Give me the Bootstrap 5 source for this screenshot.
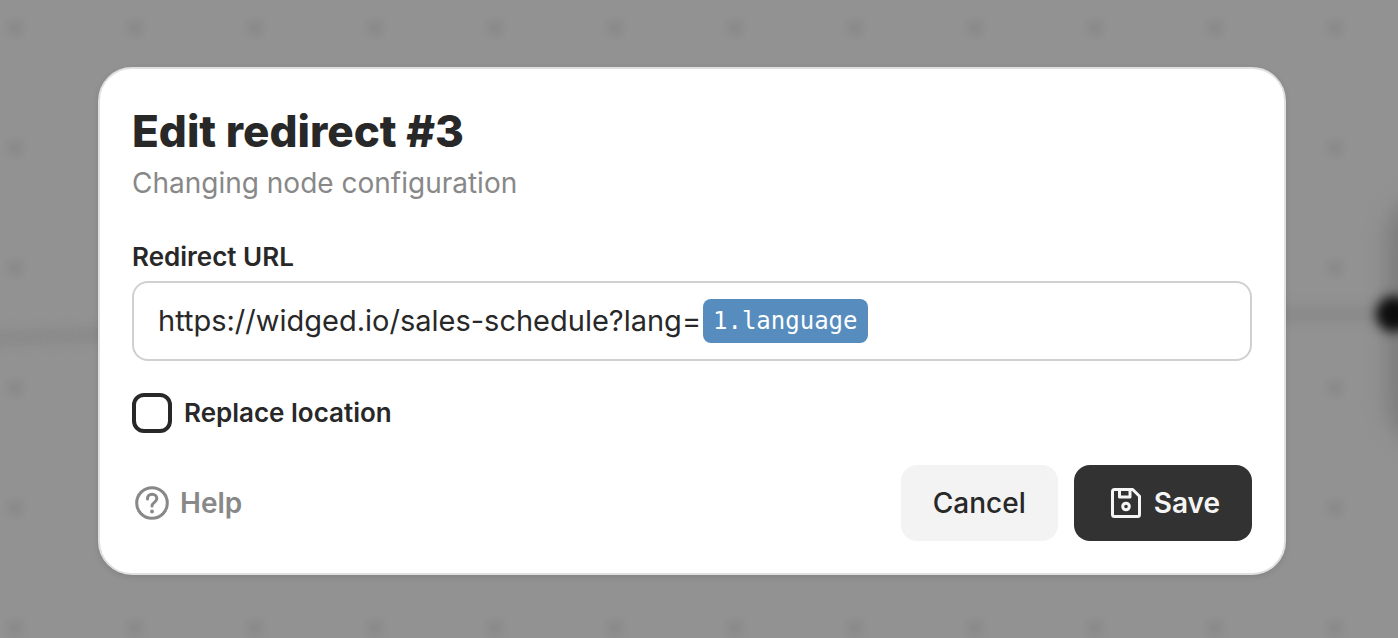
<!DOCTYPE html>
<html lang="en">
<head>
<meta charset="utf-8">
<meta name="viewport" content="width=device-width, initial-scale=1">
<title>Edit redirect #3</title>
<link href="https://cdn.jsdelivr.net/npm/bootstrap@5.3.0/dist/css/bootstrap.min.css" rel="stylesheet">
<style>
  body {
    font-family: Inter, "Liberation Sans", sans-serif;
    color: #282828;
    background: #929292;
  }
  /* blurred flow canvas behind the dialog */
  .flow-canvas {
    background: radial-gradient(circle at 15px 28px, #898989 0, #8e8e8e 7px, #929292 15px) 0 0 / 120px 120px;
    padding: 67px 112px 63px 98px;
    min-height: 100vh;
    overflow: hidden;
  }
  .flow-wire { height: 10px; background: #858585; filter: blur(7px); }
  .wire-in { left: -20px; width: 160px; top: 331px; transform: rotate(-2deg); }
  .wire-out { right: -20px; width: 180px; top: 309px; }
  .flow-node {
    right: -90px; top: 190px; width: 102px; height: 260px;
    border-radius: 50px; background: #7d7d7d; filter: blur(10px);
  }
  .flow-port {
    right: -14px; top: 296px; width: 36px; height: 36px;
    border-radius: 50%; background: #0c0c0c; filter: blur(6px);
  }
  .dialog-panel {
    background: #fff;
    border: 2px solid #e0e0e0;
    border-radius: 34px;
    padding: 32px;
    box-shadow: 0 2px 6px rgba(0, 0, 0, .1);
  }
  .dialog-title { font-size: 44px; line-height: 60px; font-weight: 800; }
  .dialog-subtitle { font-size: 28px; line-height: 44px; color: #888; }
  .field-block { padding-top: 36px; }
  .field-label { font-size: 26px; line-height: 32px; font-weight: 600; }
  .url-field {
    height: 80px;
    padding: 0 24px;
    border: 2px solid #d0d0d0;
    border-radius: 16px;
  }
  .url-text {
    width: 545px; padding: 0; border: 0; outline: 0;
    font-size: 29px; line-height: 40px; color: inherit; background: transparent;
  }
  .var-chip {
    height: 44px; padding: 0 10px;
    font: 24px/44px "DejaVu Sans Mono", monospace;
    color: #fff; background: #568cbe; border-radius: 8px;
  }
  .replace-check.form-check-input {
    width: 40px; height: 40px; margin: 0;
    border: 4px solid #282828; border-radius: 12px;
  }
  .help-link { font-size: 28px; line-height: 40px; font-weight: 600; color: #888; }
  .action-btn {
    height: 76px; padding: 0 32px;
    border: 0; border-radius: 16px;
    font-size: 28px; font-weight: 500;
  }
  .cancel-btn, .cancel-btn:hover { background: #f3f3f3; color: #282828; }
  .save-btn, .save-btn:hover { background: #323232; color: #f5f5f5; font-weight: 600; }
</style>
</head>
<body>
<div class="flow-canvas position-relative">
  <div class="flow-wire wire-in position-absolute"></div>
  <div class="flow-wire wire-out position-absolute"></div>
  <div class="flow-node position-absolute"></div>
  <div class="flow-port position-absolute"></div>

  <form class="dialog-panel position-relative" role="dialog" aria-labelledby="dialogTitle">
    <h1 class="dialog-title mb-0" id="dialogTitle">Edit redirect #3</h1>
    <p class="dialog-subtitle mb-0">Changing node configuration</p>

    <div class="field-block">
      <label class="field-label d-block mb-2" for="redirectUrl">Redirect URL</label>
      <div class="url-field d-flex align-items-center">
        <input class="url-text" id="redirectUrl" type="text" value="https://widged.io/sales-schedule?lang=" spellcheck="false">
        <span class="var-chip">1.language</span>
      </div>
    </div>

    <div class="d-flex align-items-center py-3 my-3">
      <input class="form-check-input replace-check" type="checkbox" id="replaceLocation">
      <label class="field-label ps-2 ms-1" for="replaceLocation">Replace location</label>
    </div>

    <div class="d-flex align-items-center gap-3">
      <a class="help-link d-flex align-items-center text-decoration-none me-auto" href="#">
        <svg class="me-2" width="40" height="40" viewBox="0 0 40 40" fill="none" stroke="currentColor" stroke-width="3" stroke-linecap="round" aria-hidden="true">
          <circle cx="20" cy="20" r="15.3"/>
          <path d="M15.500 16v-.5c0-2.600 2-4.200 4.600-4.200s4.700 1.700 4.700 4.300c0 3.700-4.800 3.800-4.800 7.400"/>
          <circle cx="20" cy="28.500" r="1.900" fill="currentColor" stroke="none"/>
        </svg>
        Help
      </a>
      <button class="btn action-btn cancel-btn" type="button">Cancel</button>
      <button class="btn action-btn save-btn d-flex align-items-center" type="submit">
        <svg class="me-2" width="40" height="40" viewBox="0 0 40 40" fill="none" stroke="currentColor" stroke-width="3" stroke-linejoin="round" aria-hidden="true">
          <path d="M8.500 6.500h18.200L33.500 13.300V31.500a2 2 0 0 1-2 2h-23a2 2 0 0 1-2-2v-23a2 2 0 0 1 2-2z"/>
          <path d="M13.500 6.500v7.500h10.500V6.500"/>
          <circle cx="20" cy="23.500" r="3.300"/>
        </svg>
        Save
      </button>
    </div>
  </form>
</div>
<script src="https://cdn.jsdelivr.net/npm/bootstrap@5.3.0/dist/js/bootstrap.bundle.min.js"></script>
</body>
</html>
